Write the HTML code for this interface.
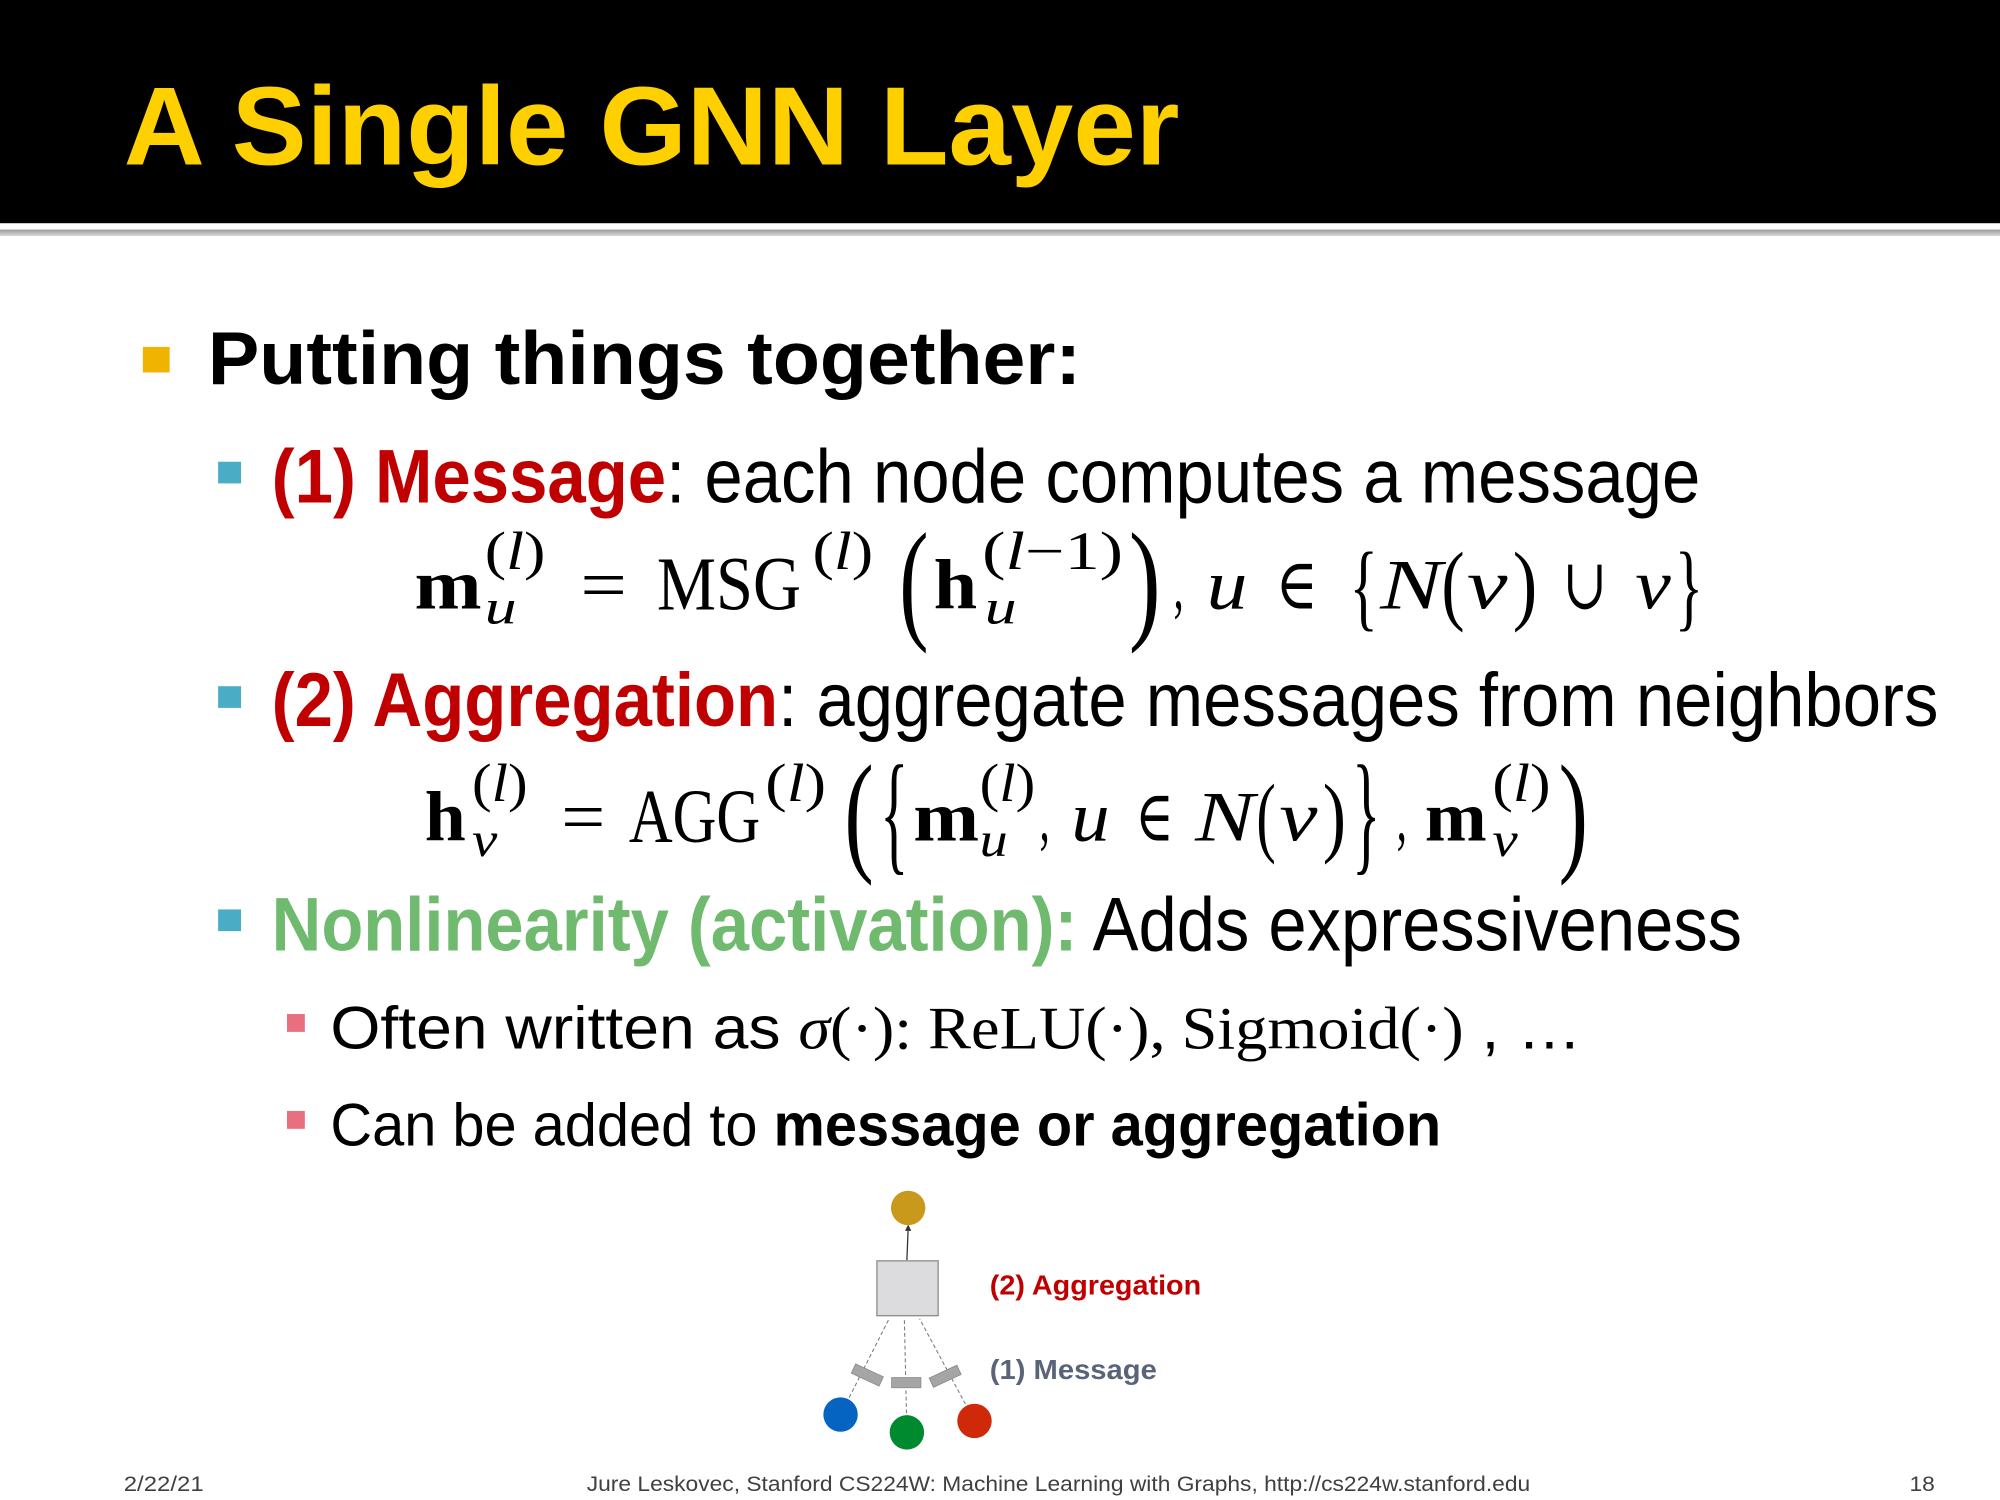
<!DOCTYPE html>
<html><head><meta charset="utf-8"><style>
html,body{margin:0;padding:0;background:#fff;overflow:hidden}
#w{position:absolute;left:0;top:0;width:1568px;height:1176px;transform:scale(1.27551);transform-origin:0 0;background:#fff}
.t{position:absolute;white-space:nowrap;line-height:1;font-family:"Liberation Sans",sans-serif;transform-origin:0 0}
.s{position:absolute;white-space:nowrap;line-height:1;font-family:"Liberation Serif","DejaVu Serif",serif;transform-origin:0 0}
.i{font-style:italic}
.b{font-weight:bold}
.sq{position:absolute}
.r{color:#c00000}
</style></head><body><div id="w">
<div style="position:absolute;left:0;top:0;width:1568px;height:175px;background:#000"></div>
<div style="position:absolute;left:0;top:180px;width:1568px;height:5px;background:linear-gradient(#9a9a9a,#d8d8d8)"></div>
<div class="t b fit w828" style="left:97px;top:56px;font-size:87px;color:#FFD000">A Single GNN Layer</div>

<div class="sq" style="left:112px;top:272px;width:21px;height:20px;background:#f0b400"></div>
<div class="t b fit w685" style="left:163px;top:252px;font-size:59px">Putting things together:</div>

<div class="sq" style="left:171px;top:362px;width:18px;height:17px;background:#4bacc6"></div>
<div class="t fit w1120" style="left:213px;top:344px;font-size:60px"><span class="b r">(1) Message</span>: each node computes a message</div>

<div class="sq" style="left:171px;top:538px;width:18px;height:17px;background:#4bacc6"></div>
<div class="t fit w1307" style="left:213px;top:519px;font-size:60px"><span class="b r">(2) Aggregation</span>: aggregate messages from neighbors</div>

<div class="sq" style="left:171px;top:713px;width:18px;height:17px;background:#4bacc6"></div>
<div class="t fit w1153" style="left:213px;top:695px;font-size:60px"><span class="b" style="color:#6fba6f">Nonlinearity (activation):</span> Adds expressiveness</div>

<div class="sq" style="left:225px;top:795px;width:14px;height:14px;background:#e8707e"></div>
<div class="t fit w981" style="left:259px;top:782px;font-size:47px">Often written as <span style="font-family:'Liberation Serif',serif"><i>σ</i>(·): ReLU(·), Sigmoid(·)</span> , …</div>

<div class="sq" style="left:225px;top:871px;width:14px;height:14px;background:#e8707e"></div>
<div class="t fit w871" style="left:259px;top:858px;font-size:47px">Can be added to <b>message or aggregation</b></div>

<!-- formula 1 -->
<span class="s b fit w53" style="left:325px;top:431px;font-size:56px">m</span>
<span class="s fit w48" style="left:380px;top:412px;font-size:42px">(<i>l</i>)</span>
<span class="s i fit w25" style="left:380px;top:458px;font-size:38px">u</span>
<span class="s fit w37" style="left:455px;top:431px;font-size:56px">=</span>
<span class="s fit w113" style="left:515px;top:428px;font-size:60px">MSG</span>
<span class="s fit w48" style="left:637px;top:412px;font-size:42px">(<i>l</i>)</span>
<span class="s fit w23" style="left:705px;top:402px;font-size:105px">(</span>
<span class="s b fit w34" style="left:732px;top:431px;font-size:56px">h</span>
<span class="s fit w110" style="left:770px;top:412px;font-size:42px">(<i>l</i>−1)</span>
<span class="s i fit w25" style="left:772px;top:458px;font-size:38px">u</span>
<span class="s fit w25" style="left:885px;top:402px;font-size:105px">)</span>
<span class="s fit w8" style="left:920px;top:431px;font-size:56px">,</span>
<span class="s i fit w32" style="left:946px;top:431px;font-size:56px">u</span>
<span class="s fit w33" style="left:1000px;top:431px;font-size:56px">∈</span>
<span class="s fit w22" style="left:1058px;top:422px;font-size:76px">{</span>
<span class="s i fit w48" style="left:1082px;top:431px;font-size:56px">N</span>
<span class="s fit w18" style="left:1130px;top:424px;font-size:70px">(</span>
<span class="s i fit w32" style="left:1150px;top:431px;font-size:56px">v</span>
<span class="s fit w19" style="left:1186px;top:424px;font-size:70px">)</span>
<span class="s fit w35" style="left:1225px;top:431px;font-size:56px">∪</span>
<span class="s i fit w28" style="left:1282px;top:431px;font-size:56px">v</span>
<span class="s fit w22" style="left:1313px;top:422px;font-size:76px">}</span>

<!-- formula 2 -->
<span class="s b fit w32" style="left:333px;top:613px;font-size:56px">h</span>
<span class="s fit w44" style="left:370px;top:594px;font-size:42px">(<i>l</i>)</span>
<span class="s i fit w20" style="left:370px;top:640px;font-size:38px">v</span>
<span class="s fit w35" style="left:440px;top:613px;font-size:56px">=</span>
<span class="s fit w103" style="left:493px;top:610px;font-size:60px">AGG</span>
<span class="s fit w48" style="left:600px;top:594px;font-size:42px">(<i>l</i>)</span>
<span class="s fit w23" style="left:662px;top:584px;font-size:105px">(</span>
<span class="s fit w22" style="left:690px;top:584px;font-size:105px">{</span>
<span class="s b fit w52" style="left:716px;top:613px;font-size:56px">m</span>
<span class="s fit w44" style="left:768px;top:594px;font-size:42px">(<i>l</i>)</span>
<span class="s i fit w22" style="left:768px;top:640px;font-size:38px">u</span>
<span class="s fit w8" style="left:815px;top:613px;font-size:56px">,</span>
<span class="s i fit w30" style="left:840px;top:613px;font-size:56px">u</span>
<span class="s fit w30" style="left:890px;top:613px;font-size:56px">∈</span>
<span class="s i fit w46" style="left:937px;top:613px;font-size:56px">N</span>
<span class="s fit w15" style="left:985px;top:606px;font-size:70px">(</span>
<span class="s i fit w30" style="left:1003px;top:613px;font-size:56px">v</span>
<span class="s fit w18" style="left:1037px;top:606px;font-size:70px">)</span>
<span class="s fit w22" style="left:1060px;top:584px;font-size:105px">}</span>
<span class="s fit w8" style="left:1095px;top:613px;font-size:56px">,</span>
<span class="s b fit w49" style="left:1117px;top:613px;font-size:56px">m</span>
<span class="s fit w46" style="left:1170px;top:594px;font-size:42px">(<i>l</i>)</span>
<span class="s i fit w20" style="left:1170px;top:640px;font-size:38px">v</span>
<span class="s fit w23" style="left:1222px;top:584px;font-size:105px">)</span>

<!-- diagram -->
<svg style="position:absolute;left:0;top:0" width="1568" height="1176">
<line x1="711" y1="988" x2="712" y2="963" stroke="#333" stroke-width="1"/>
<polygon points="712,960 709.5,965 714.5,965" fill="#333"/>
<circle cx="712" cy="947" r="13.5" fill="#c9991c"/>
<rect x="687.5" y="988.5" width="48" height="43" fill="#dcdcde" stroke="#8a8a8a" stroke-width="1"/>
<g stroke="#777" stroke-width="0.8" stroke-dasharray="3,2" fill="none">
<line x1="659" y1="1109" x2="697" y2="1034"/>
<line x1="711" y1="1123" x2="709" y2="1034"/>
<line x1="764" y1="1114" x2="721" y2="1034"/>
</g>
<rect x="668" y="1074" width="24" height="8" fill="#a5a5a5" stroke="#888" stroke-width="0.6" transform="rotate(25 680 1078)"/>
<rect x="699" y="1080" width="23" height="8" fill="#a5a5a5" stroke="#888" stroke-width="0.6"/>
<rect x="729" y="1075" width="24" height="8" fill="#a5a5a5" stroke="#888" stroke-width="0.6" transform="rotate(-25 741 1079)"/>
<circle cx="659" cy="1109" r="13.5" fill="#0563c1"/>
<circle cx="711" cy="1123" r="13.5" fill="#008a30"/>
<circle cx="764" cy="1114" r="13.5" fill="#d0290a"/>
</svg>
<div class="t b fit w166" style="left:776px;top:997px;font-size:22px;color:#c00000">(2) Aggregation</div>
<div class="t b fit w131" style="left:776px;top:1063px;font-size:22px;color:#5a6478">(1) Message</div>

<div class="t fit w63" style="left:97px;top:1155px;font-size:17px;color:#404040">2/22/21</div>
<div class="t fit w740" style="left:460px;top:1155px;font-size:17px;color:#404040">Jure Leskovec, Stanford CS224W: Machine Learning with Graphs, http://cs224w.stanford.edu</div>
<div class="t fit w20" style="left:1497px;top:1155px;font-size:17px;color:#404040">18</div>
</div>
<script>
document.querySelectorAll('.fit').forEach(function(e){
 var m=e.className.match(/\bw(\d+)\b/); if(!m)return;
 var w=+m[1], r=e.offsetWidth; if(r>0) e.style.transform='scaleX('+(w/r)+')';
});
</script>
</body></html>
